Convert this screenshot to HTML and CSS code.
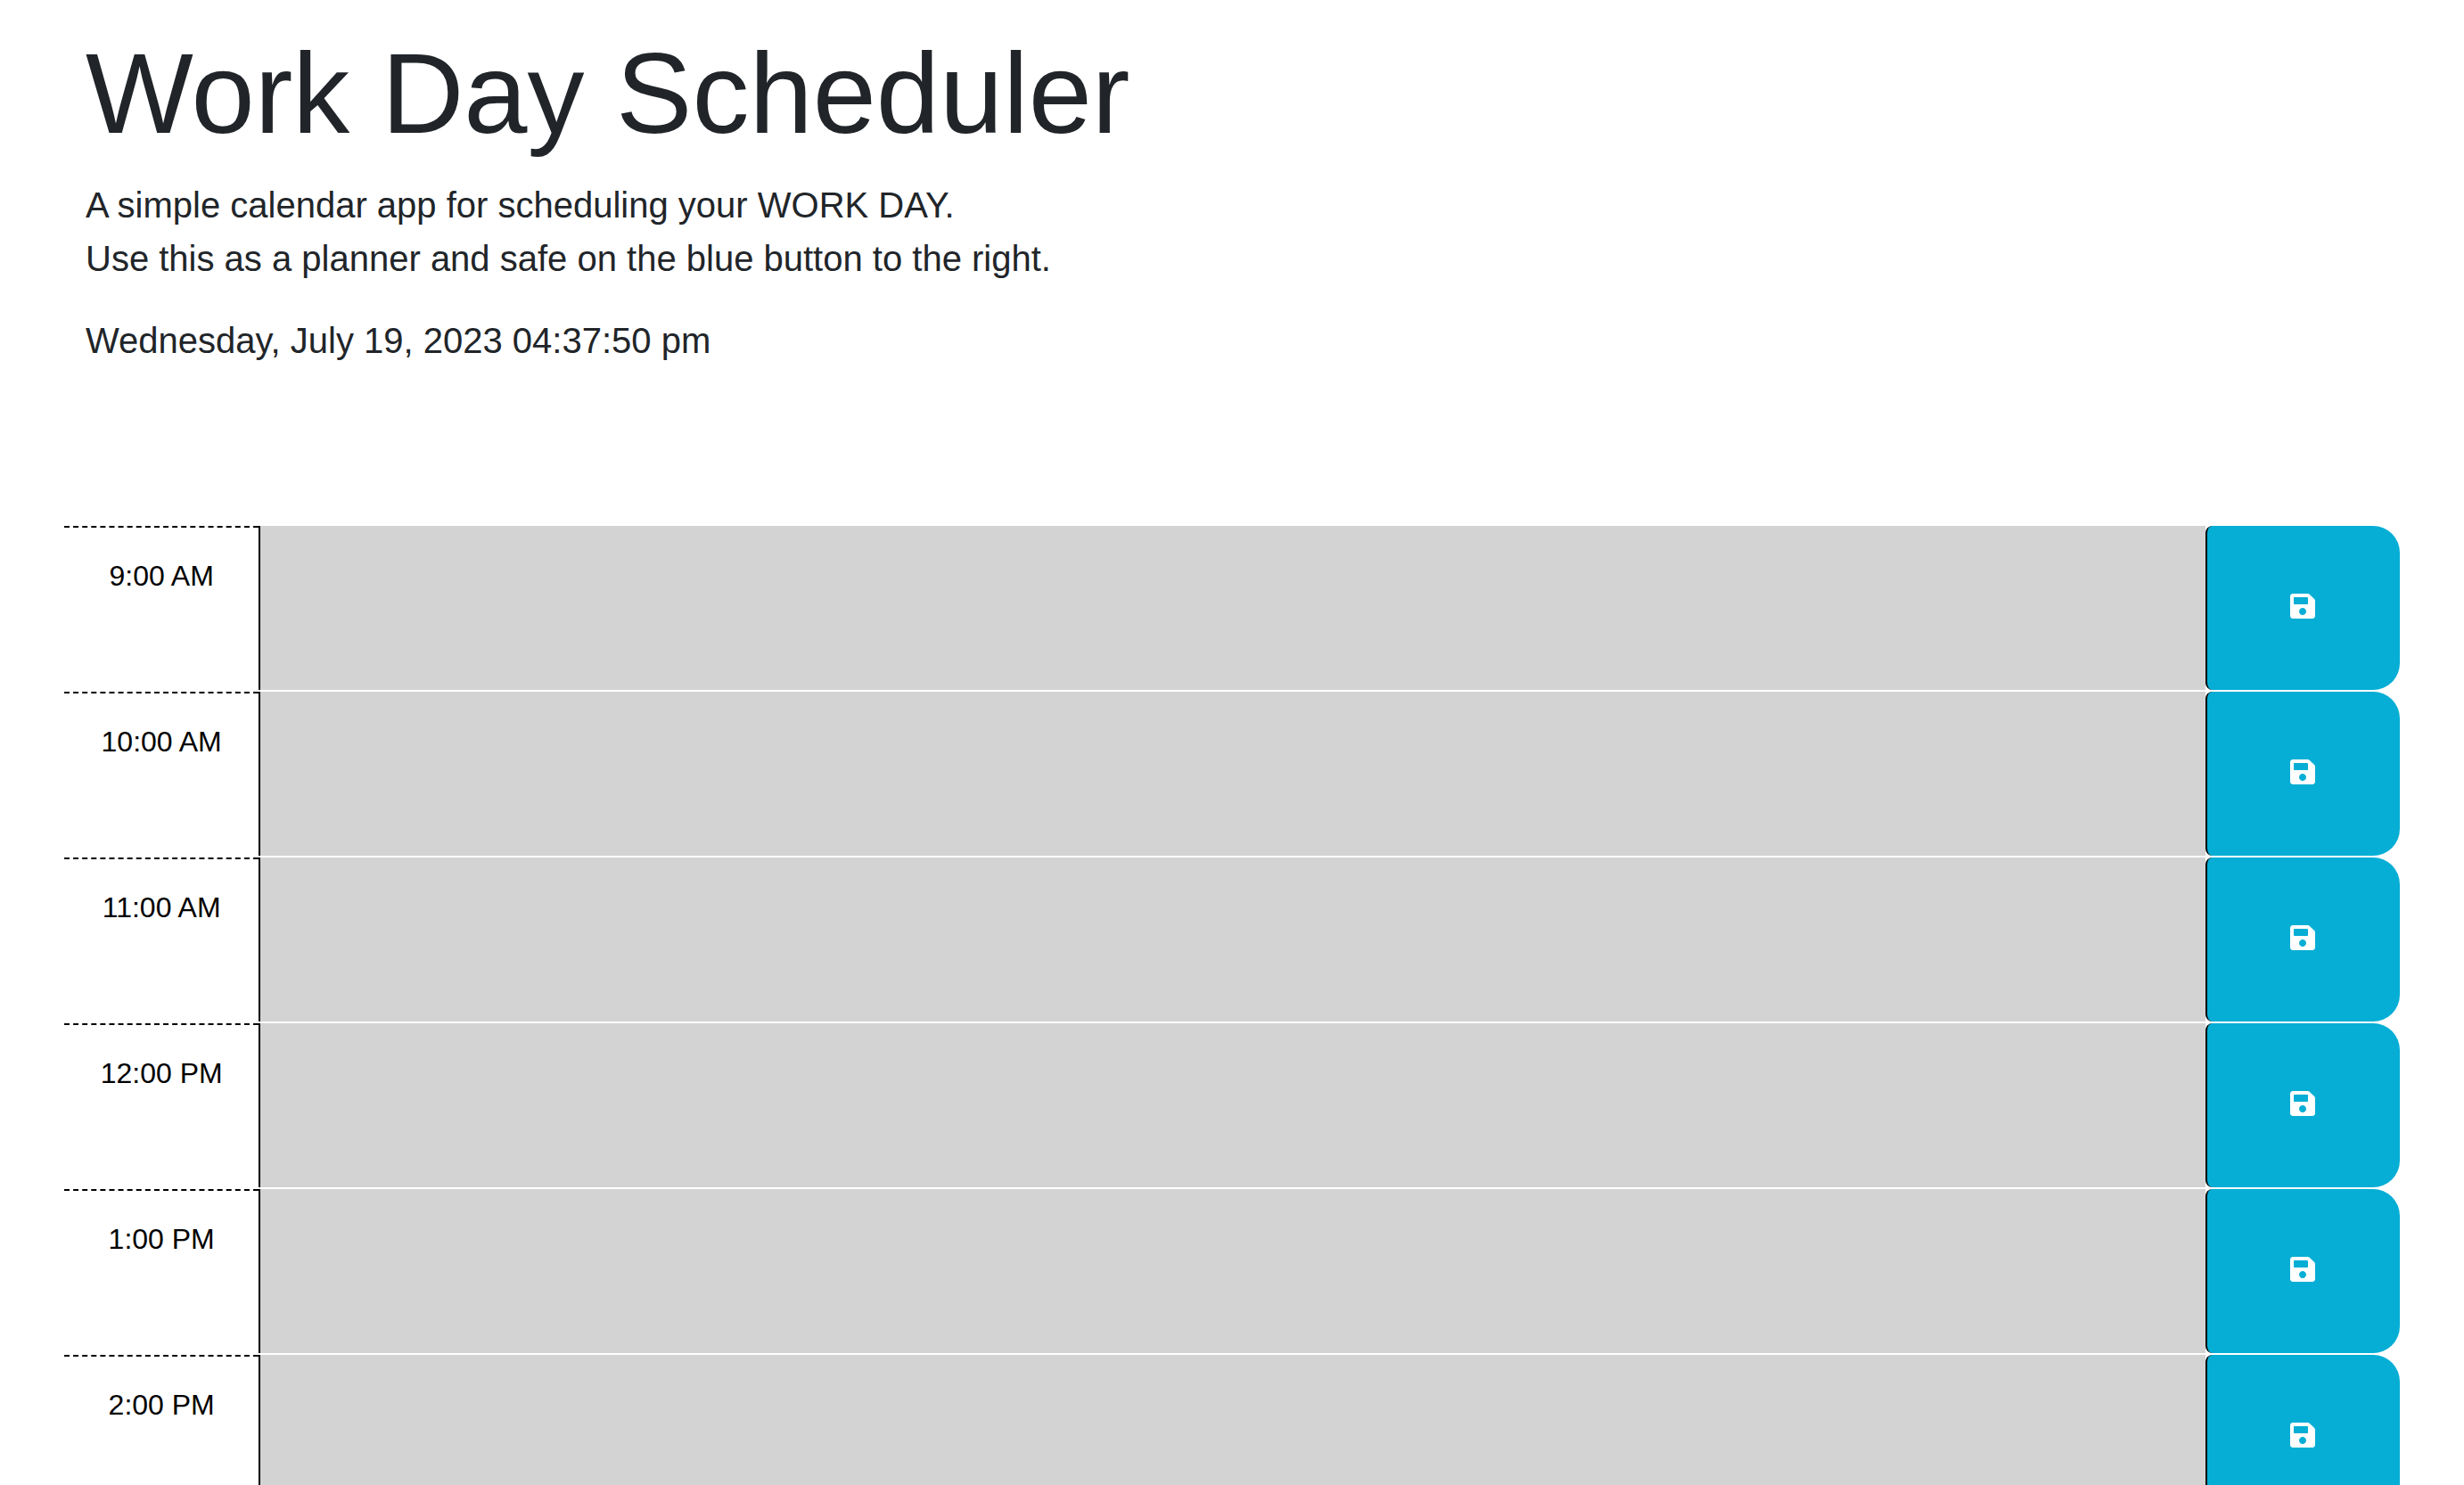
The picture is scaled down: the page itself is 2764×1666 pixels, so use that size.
FILE: index.html
```html
<!DOCTYPE html>
<html lang="en">
<head>
  <meta charset="utf-8">
  <meta name="viewport" content="width=device-width, initial-scale=1">
  <title>Work Day Scheduler</title>
  <link rel="stylesheet" href="styles.css">
</head>
<body>
  <svg class="sprite" aria-hidden="true">
    <symbol id="save" viewBox="0 0 448 512">
      <path fill="currentColor" d="M433.941 129.941l-83.882-83.882A48 48 0 0 0 316.118 32H48C21.49 32 0 53.49 0 80v352c0 26.51 21.49 48 48 48h352c26.51 0 48-21.49 48-48V163.882a48 48 0 0 0-14.059-33.941zM224 416c-35.346 0-64-28.654-64-64 0-35.346 28.654-64 64-64s64 28.654 64 64c0 35.346-28.654 64-64 64zm96-304.52V212c0 6.627-5.373 12-12 12H76c-6.627 0-12-5.373-12-12V108c0-6.627 5.373-12 12-12h228.52c3.183 0 6.235 1.264 8.485 3.515l3.48 3.48A11.996 11.996 0 0 1 320 111.48z"/>
    </symbol>
  </svg>
  <header class="header">
    <h1 class="title">Work Day Scheduler</h1>
    <p class="lead">A simple calendar app for scheduling your WORK DAY.<br>Use this as a planner and safe on the blue button to the right.</p>
    <p class="lead">Wednesday, July 19, 2023 04:37:50 pm</p>
  </header>
  <main class="schedule">
    <div class="time-block">
      <label class="hour" for="hour-9">9:00 AM</label>
      <textarea class="description" id="hour-9"></textarea>
      <button class="save-btn" type="button" aria-label="Save 9:00 AM"><svg class="icon"><use href="#save"/></svg></button>
    </div>
    <div class="time-block">
      <label class="hour" for="hour-10">10:00 AM</label>
      <textarea class="description" id="hour-10"></textarea>
      <button class="save-btn" type="button" aria-label="Save 10:00 AM"><svg class="icon"><use href="#save"/></svg></button>
    </div>
    <div class="time-block">
      <label class="hour" for="hour-11">11:00 AM</label>
      <textarea class="description" id="hour-11"></textarea>
      <button class="save-btn" type="button" aria-label="Save 11:00 AM"><svg class="icon"><use href="#save"/></svg></button>
    </div>
    <div class="time-block">
      <label class="hour" for="hour-12">12:00 PM</label>
      <textarea class="description" id="hour-12"></textarea>
      <button class="save-btn" type="button" aria-label="Save 12:00 PM"><svg class="icon"><use href="#save"/></svg></button>
    </div>
    <div class="time-block">
      <label class="hour" for="hour-13">1:00 PM</label>
      <textarea class="description" id="hour-13"></textarea>
      <button class="save-btn" type="button" aria-label="Save 1:00 PM"><svg class="icon"><use href="#save"/></svg></button>
    </div>
    <div class="time-block">
      <label class="hour" for="hour-14">2:00 PM</label>
      <textarea class="description" id="hour-14"></textarea>
      <button class="save-btn" type="button" aria-label="Save 2:00 PM"><svg class="icon"><use href="#save"/></svg></button>
    </div>
  </main>
</body>
</html>
```
FILE: styles.css
```css
*, *::before, *::after { box-sizing: border-box; }

body {
  margin: 0;
  background: #fff;
  color: #212529;
  font-family: "Liberation Sans", Arial, sans-serif;
  font-size: 32px;
  line-height: 48px;
}

.sprite { display: none; }

.header { padding: 28px 96px 146px; }

.title {
  margin: 0 0 19px;
  font-size: 128px;
  font-weight: 500;
  line-height: 153px;
}

.lead {
  margin: 0 0 32px;
  font-size: 40px;
  line-height: 60px;
}

.schedule {
  display: grid;
  gap: 2px;
  padding: 0 72px;
}

.time-block {
  display: grid;
  grid-template-columns: 1fr 10fr 1fr;
  min-height: 184px;
}

.hour {
  padding-top: 30px;
  border-top: 2px dashed #000;
  color: #000;
  text-align: center;
}

.description {
  display: block;
  width: 100%;
  margin: 0;
  padding: 16px;
  border: 0;
  border-left: 2px solid #000;
  border-radius: 0;
  outline: 0;
  background: #d3d3d3;
  color: #000;
  font: inherit;
  resize: none;
}

.save-btn {
  display: flex;
  align-items: center;
  justify-content: center;
  padding: 0 2px 4px 0;
  border: 0;
  border-left: 2px solid #000;
  border-radius: 8px 30px 30px 8px;
  background: #06aed5;
  color: #fff;
  cursor: pointer;
}

.icon {
  width: 28px;
  height: 32px;
}
```
